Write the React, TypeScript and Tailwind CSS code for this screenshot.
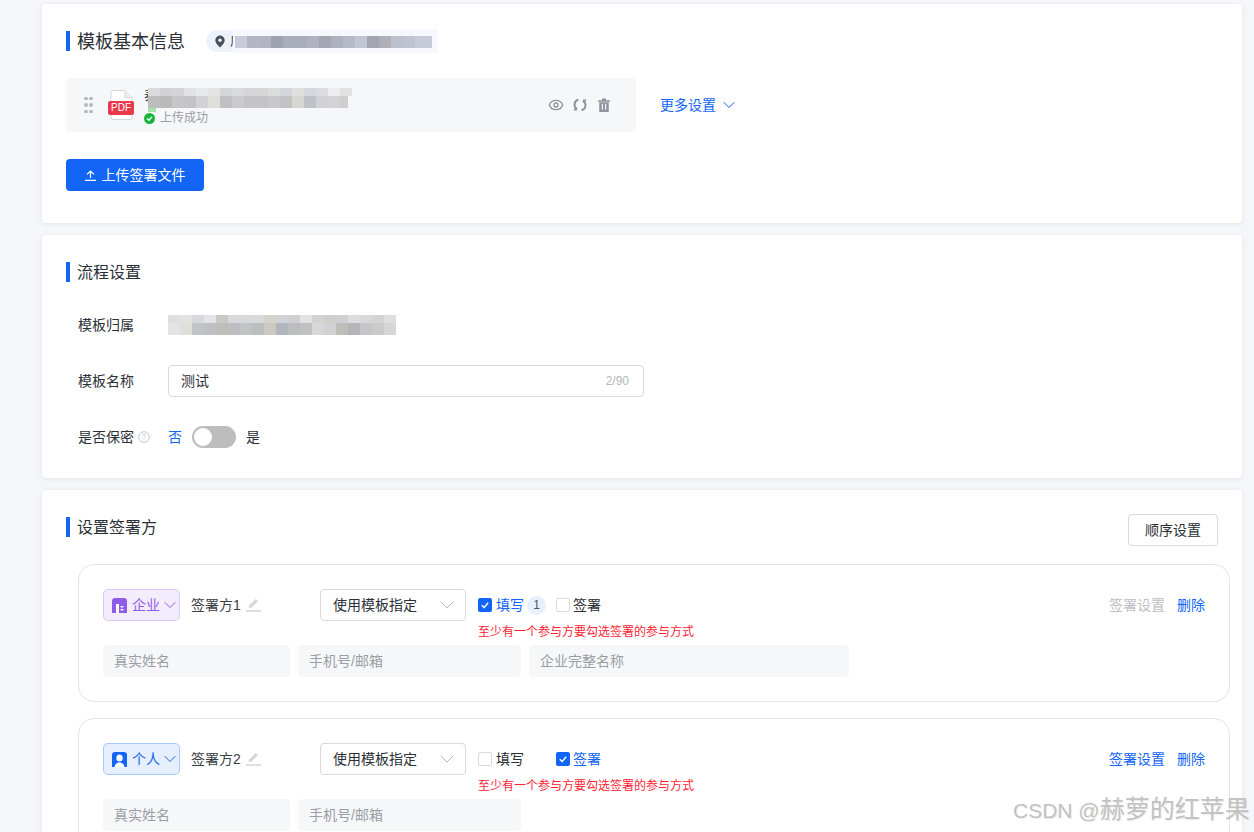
import React from 'react';
import { ChevronDown, Eye } from 'lucide-react';

const tagCells = ['bg-[#c8cbd9]', 'bg-[#b4b7c3]', 'bg-[#b2b5c1]', 'bg-[#9fa3b1]', 'bg-[#a9acb9]', 'bg-[#a9acb9]', 'bg-[#afb2bf]', 'bg-[#a5a6b2]', 'bg-[#adb1bf]', 'bg-[#b6b9c6]', 'bg-[#c2c5d2]', 'bg-[#a3a5b2]', 'bg-[#aeafb9]', 'bg-[#bcc1ce]', 'bg-[#c0c3d0]', 'bg-[#c8ccd9]', 'bg-[#c8ccd9]'];

const fileRowTop = ['bg-[#dadadc]', 'bg-[#d2d2d4]', 'bg-[#d4d4d6]', 'bg-[#e2e2e4]', 'bg-[#e6e9ec]', 'bg-[#e4e4e4]', 'bg-[#d2d6da]', 'bg-[#dadadc]', 'bg-[#d6d6d8]', 'bg-[#d6d6d6]', 'bg-[#dcdcdc]', 'bg-[#d2d6da]', 'bg-[#e0dfde]', 'bg-[#d4d8de]', 'bg-[#dcdcde]', 'bg-[#eeeef0]', 'bg-[#e2e2e2]'];
const fileRowBottom = ['bg-[#bdbdbd]', 'bg-[#bababa]', 'bg-[#c6c6c8]', 'bg-[#c4c4c6]', 'bg-[#d0d2d4]', 'bg-[#dededa]', 'bg-[#bfc0c4]', 'bg-[#cbcbcd]', 'bg-[#c4c4c6]', 'bg-[#c4c4c6]', 'bg-[#c8c8ca]', 'bg-[#c0c2c4]', 'bg-[#d8d6d2]', 'bg-[#bec2c8]', 'bg-[#d2d2d4]', 'bg-[#d4d4d6]', 'bg-[#cfcfd0]'];

const ownerRowTop = ['bg-[#dedfe1]', 'bg-[#e2e2e0]', 'bg-[#d8d9dc]', 'bg-[#e2e3e6]', 'bg-[#cbc9c6]', 'bg-[#d8d9db]', 'bg-[#d8d9db]', 'bg-[#d9dadc]', 'bg-[#d6d3cc]', 'bg-[#d0d4d8]', 'bg-[#d0d0d2]', 'bg-[#e2e2e4]', 'bg-[#d4d2d2]', 'bg-[#d0cfcc]', 'bg-[#d0d0d2]', 'bg-[#dcdcde]', 'bg-[#d8d8da]', 'bg-[#d4d4d4]', 'bg-[#dededf]'];
const ownerRowBottom = ['bg-[#e4e4e6]', 'bg-[#dedfd8]', 'bg-[#c2c3c7]', 'bg-[#bec0c4]', 'bg-[#bfbdb9]', 'bg-[#bcbec2]', 'bg-[#c2c3c4]', 'bg-[#bcbfc0]', 'bg-[#cbc9c1]', 'bg-[#b2b5bd]', 'bg-[#bcbdbf]', 'bg-[#c0c1c2]', 'bg-[#d8d8da]', 'bg-[#d2d2d4]', 'bg-[#bfbdb8]', 'bg-[#b4b5b9]', 'bg-[#c6c6c8]', 'bg-[#cbcbcd]', 'bg-[#d6d6d8]'];

const MosaicRow = ({ cells, height }: { cells: string[]; height: string }) => (
  <div className={`flex overflow-hidden ${height}`}>
    {cells.map((c, i) => (
      <div key={i} className={`w-3 shrink-0 ${c}`} />
    ))}
  </div>
);

const SectionTitle = ({ text, big }: { text: string; big?: boolean }) => (
  <div className="flex items-center h-5">
    <div className="w-1 h-5 bg-[#1366f5]" />
    <span className={`ml-[8px] pt-[2px] -translate-x-px text-[#2b2f36] whitespace-nowrap ${big ? 'text-[18px]' : 'text-[16px]'}`}>{text}</span>
  </div>
);

const PdfIcon = () => (
  <div className="relative w-[26px] h-[30px] shrink-0">
    <svg width="26" height="30" viewBox="0 0 26 30" fill="none">
      <path d="M3 2.5a2 2 0 0 1 2-2h12l7 7v20a2 2 0 0 1-2 2H5a2 2 0 0 1-2-2z" fill="#fff" stroke="#d5d6da" />
      <path d="M17 .5v7h7" stroke="#d5d6da" fill="#eceef1" />
    </svg>
    <div className="absolute left-0 top-[11px] w-[26px] h-[14px] rounded-[2px] bg-[#e9394a] text-white text-[10px] leading-[14px] text-center">
      PDF
    </div>
  </div>
);

const DragDots = () => (
  <div className="grid grid-cols-2 gap-x-[2px] gap-y-[3px] w-2">
    {[0, 1, 2, 3, 4, 5].map((i) => (
      <div key={i} className="w-[3.5px] h-[3.5px] rounded-full bg-[#b4b7bd]" />
    ))}
  </div>
);

const RefreshIcon = () => (
  <svg width="14" height="14" viewBox="0 0 14 14" fill="none" stroke="#8d939c" strokeWidth="2">
    <path d="M5.5 1.8C3 2.4 1.5 4.5 1.5 7c0 1.9.9 3.4 2.4 4.4" />
    <path d="M8.5 12.2c2.5-.6 4-2.7 4-5.2 0-1.9-.9-3.4-2.4-4.4" />
    <path d="M3.2 9.2v2.6H.8" strokeWidth="1.5" />
    <path d="M10.8 4.8V2.2h2.4" strokeWidth="1.5" />
  </svg>
);

const TrashIcon = () => (
  <svg width="14" height="14" viewBox="0 0 14 14">
    <path d="M1 2.2h12v1.500H1zM5 .5h4v1.700H5z" fill="#8d939c" />
    <path d="M2.200 4.200h9.600V13a1 1 0 0 1-1 1H3.200a1 1 0 0 1-1-1z" fill="#8d939c" />
    <path d="M4.800 5.800h1.200v6H4.800zM8 5.800h1.200v6H8z" fill="#f6f7f9" />
  </svg>
);

const UploadIcon = () => (
  <svg width="11" height="11" viewBox="0 0 11 11" fill="none" stroke="#fff" strokeWidth="1.2">
    <path d="M5.500 8V1M2 4.400 5.500 1 9 4.400M0 10.400h11" />
  </svg>
);

const Pencil = () => (
  <svg width="15" height="14" viewBox="0 0 15 14" fill="#d4d6da">
    <path d="M9.600 1 12 3.200 5.600 9.600l-3 .7.7-3z" />
    <rect x="0" y="12.200" width="15" height="1.600" />
  </svg>
);

const Checkbox = ({ checked }: { checked?: boolean }) =>
  checked ? (
    <div className="w-[14px] h-[14px] rounded-[2px] bg-[#1366f5] flex items-center justify-center">
      <svg width="10" height="10" viewBox="0 0 10 10" fill="none" stroke="#fff" strokeWidth="1.400">
        <path d="M1.800 5.200 4.200 7.400 8.200 2.800" />
      </svg>
    </div>
  ) : (
    <div className="w-[14px] h-[14px] rounded-[2px] border border-[#d9d9d9] bg-white" />
  );

const Field = ({ text, width }: { text: string; width: string }) => (
  <div className={`h-8 ${width} rounded-[4px] bg-[#f6f7f9] pl-[11px] flex items-center text-[14px] text-[#9a9ea6]`}>{text}</div>
);

const CompanyIcon = () => (
  <svg width="15" height="15" viewBox="0 0 15 15" className="shrink-0">
    <path d="M3 0h9a3 3 0 0 1 3 3v12H0V3a3 3 0 0 1 3-3z" fill="#8f5be8" />
    <rect x="4" y="6" width="3" height="9" fill="#fff" />
    <rect x="8.500" y="8" width="3" height="1.400" fill="#fff" />
    <rect x="8.500" y="11" width="3" height="1.400" fill="#fff" />
  </svg>
);

const PersonIcon = () => (
  <svg width="15" height="15" viewBox="0 0 15 15" className="shrink-0">
    <path d="M3 0h9a3 3 0 0 1 3 3v12H0V3a3 3 0 0 1 3-3z" fill="#1366f5" />
    <ellipse cx="7.500" cy="6" rx="3.200" ry="3.600" fill="#fff" />
    <path d="M2.500 15c.4-3 2.400-4.500 5-4.500s4.600 1.500 5 4.500z" fill="#fff" />
  </svg>
);

interface SignerProps {
  kind: 'company' | 'person';
  name: string;
  fill?: boolean;
  sign?: boolean;
  settingsOn?: boolean;
}

const SignerCard = ({ kind, name, fill, sign, settingsOn }: SignerProps) => {
  const isCompany = kind === 'company';
  return (
    <div className="border border-[#e3e4e8] rounded-2xl pl-6 pr-6 pt-6 pb-6">
      <div className="flex h-8 text-[14px]">
        <div
          className={`w-[77px] h-8 rounded-[5px] border flex items-center pl-2 shrink-0 ${
            isCompany ? 'bg-[#f3ecfd] border-[#dcc6f8] text-[#8f5be8]' : 'bg-[#e6effe] border-[#a9c8fa] text-[#1366f5]'
          }`}
        >
          {isCompany ? <CompanyIcon /> : <PersonIcon />}
          <span className="ml-[5px] whitespace-nowrap">{isCompany ? '企业' : '个人'}</span>
          <ChevronDown size={20} strokeWidth={1.2} className="shrink-0" />
        </div>
        <div className="w-[129px] ml-[11px] flex items-center text-[#3b3f46] shrink-0">
          <span>{name}</span>
          <span className="ml-[5px]">
            <Pencil />
          </span>
        </div>
        <div className="w-[146px] h-8 rounded-[4px] border border-[#d9d9d9] flex items-center justify-between pl-3 pr-[6px] text-[#2b2f36] shrink-0">
          <span>使用模板指定</span>
          <ChevronDown size={24} strokeWidth={1} className="text-[#b4b7bd]" />
        </div>
        <div className="ml-3 shrink-0">
          <div className="h-8 flex items-center">
            <Checkbox checked={fill} />
            <span className={`ml-1 ${fill ? 'text-[#1366f5]' : 'text-[#2b2f36]'}`}>填写</span>
            {fill ? (
              <span className="ml-[3px] w-[19px] h-[19px] rounded-full bg-[#e8f0fe] text-[#4d5560] text-[12px] leading-[19px] text-center">1</span>
            ) : (
              <span className="w-[22px]" />
            )}
            <span className="ml-[10px]">
              <Checkbox checked={sign} />
            </span>
            <span className={`ml-[3px] ${sign ? 'text-[#1366f5]' : 'text-[#2b2f36]'}`}>签署</span>
          </div>
          <div className="mt-[3px] text-[12px] leading-4 text-[#ff2233] whitespace-nowrap">至少有一个参与方要勾选签署的参与方式</div>
        </div>
        <div className="ml-auto h-8 flex items-center">
          <span className={settingsOn ? 'text-[#1366f5]' : 'text-[#bdbfc4]'}>签署设置</span>
          <span className="ml-3 text-[#1366f5]">删除</span>
        </div>
      </div>
      <div className="flex gap-2 mt-6">
        <Field text="真实姓名" width="w-[187px]" />
        <Field text="手机号/邮箱" width="w-[223px]" />
        {isCompany && <Field text="企业完整名称" width="w-[320px]" />}
      </div>
    </div>
  );
};

export default function App() {
  return (
    <div
      className="relative h-[832px] overflow-hidden bg-[#f5f6f9] pl-[42px] pr-3 pt-1 flex flex-col gap-3"
      style={{ fontFamily: '"Liberation Sans", "Noto Sans CJK SC", sans-serif' }}
    >
      {/* basic info */}
      <div className="shrink-0 bg-white rounded-[4px] shadow-[0_1px_4px_rgba(0,0,0,0.08)] pl-6 pr-6 pt-[26px] pb-8">
        <div className="flex items-center h-[22px]">
          <SectionTitle text="模板基本信息" big />
          <div className="relative ml-5 w-[230px] h-[22px] rounded-l-full bg-[#edf2fd] flex items-center pl-2">
            <svg width="12" height="13" viewBox="0 0 12 13" fill="#4a5058">
              <path fillRule="evenodd" d="M6 .5a4.700 4.700 0 0 1 4.700 4.700C10.700 8.400 6 12.500 6 12.500S1.300 8.400 1.300 5.200A4.700 4.700 0 0 1 6 .5zm0 3a1.800 1.800 0 1 0 0 3.600 1.800 1.800 0 0 0 0-3.600z" />
            </svg>
            <span className="ml-1 text-[13px] text-[#4a5058]">广</span>
            <div className="absolute left-[27px] -top-px w-[205px] h-[24px] bg-[#f7f8fe]">
              <div className="absolute left-[2px] top-[7px] w-[197px]">
                <MosaicRow cells={tagCells} height="h-3" />
              </div>
            </div>
          </div>
        </div>

        <div className="flex items-center mt-[26px]">
          <div className="w-[570px] h-[54px] rounded-[4px] bg-[#f6f7f9] flex items-center pl-[18px] pr-[25px]">
            <DragDots />
            <div className="ml-4">
              <PdfIcon />
            </div>
            <div className="relative ml-[10px] w-[210px] h-[40px]">
              <div className="text-[13px] leading-[18px] pt-[2px] text-[#2b2f36]">泰</div>
              <div className="absolute left-[4px] top-[3px]">
                <MosaicRow cells={fileRowTop} height="h-2 w-[204px]" />
                <MosaicRow cells={fileRowBottom} height="h-3 w-[200px]" />
                <div className="w-2 h-1 bg-[#a8e2ac]" />
              </div>
              <div className="absolute left-0 top-[25px] flex items-center text-[12px] leading-4 text-[#9a9ea6]">
                <svg width="11" height="11" viewBox="0 0 11 11">
                  <circle cx="5.500" cy="5.500" r="5.500" fill="#17b53c" />
                  <path d="M3 5.600 4.900 7.300 8 3.900" fill="none" stroke="#fff" strokeWidth="1.400" />
                </svg>
                <span className="ml-[5px]">上传成功</span>
              </div>
            </div>
            <div className="ml-auto flex items-center gap-[10px] text-[#8d939c]">
              <Eye size={16} strokeWidth={2} className="-mr-px" />
              <RefreshIcon />
              <TrashIcon />
            </div>
          </div>
          <div className="ml-6 flex items-center text-[14px] text-[#1366f5]">
            <span>更多设置</span>
            <ChevronDown size={20} strokeWidth={1.2} className="ml-[3px]" />
          </div>
        </div>

        <button className="mt-[27px] w-[138px] h-8 rounded-[4px] bg-[#1366f5] text-white text-[14px] flex items-center justify-center">
          <UploadIcon />
          <span className="ml-[6px]">上传签署文件</span>
        </button>
      </div>

      {/* flow settings */}
      <div className="shrink-0 bg-white rounded-[4px] shadow-[0_1px_4px_rgba(0,0,0,0.08)] pl-6 pr-6 pt-[27px] pb-[25px]">
        <SectionTitle text="流程设置" />
        <div className="pl-3 mt-[27px] flex flex-col gap-6 text-[14px] text-[#2b2f36]">
          <div className="flex items-center h-8">
            <span className="w-[90px]">模板归属</span>
            <div>
              <MosaicRow cells={ownerRowTop} height="h-2" />
              <MosaicRow cells={ownerRowBottom} height="h-3" />
            </div>
          </div>
          <div className="flex items-center h-8">
            <span className="w-[90px]">模板名称</span>
            <div className="w-[476px] h-8 rounded-[4px] border border-[#d9d9d9] flex items-center justify-between pl-3 pr-[14px]">
              <span>测试</span>
              <span className="text-[12px] text-[#b4b7bd]">2/90</span>
            </div>
          </div>
          <div className="flex items-center h-8">
            <span className="w-[60px] whitespace-nowrap">是否保密</span>
            <svg width="12" height="12" viewBox="0 0 12 12" fill="none" stroke="#c2c6cc">
              <circle cx="6" cy="6" r="5.300" />
              <path d="M4.500 4.700c0-2 3-2 3-.1 0 1.200-1.500 1.200-1.500 2.500" />
              <path d="M6 8.200v1" />
            </svg>
            <span className="ml-[18px] text-[#1366f5]">否</span>
            <div className="ml-[10px] w-[44px] h-[22px] rounded-full bg-[#bdbdbd] flex items-center pl-[2px]">
              <div className="w-[18px] h-[18px] rounded-full bg-white" />
            </div>
            <span className="ml-[10px]">是</span>
          </div>
        </div>
      </div>

      {/* signers */}
      <div className="flex-1 bg-white rounded-[4px] shadow-[0_1px_4px_rgba(0,0,0,0.08)] pl-6 pr-3 pt-6">
        <div className="flex items-start h-8 pr-3">
          <div className="mt-[3px]">
            <SectionTitle text="设置签署方" />
          </div>
          <button className="ml-auto w-[90px] h-8 rounded-[4px] border border-[#d9d9d9] text-[14px] text-[#2b2f36]">顺序设置</button>
        </div>
        <div className="ml-3 mt-[18px] flex flex-col gap-4">
          <SignerCard kind="company" name="签署方1" fill />
          <SignerCard kind="person" name="签署方2" sign settingsOn />
        </div>
      </div>

      <div className="absolute left-[1013px] top-[793px] flex items-baseline leading-8 text-[#c2c2c2] whitespace-nowrap [text-shadow:1px_1px_1px_rgba(0,0,0,0.08)]">
        <span className="text-[21px]">CSDN @</span>
        <span className="text-[25px]">赫萝的红苹果</span>
      </div>
    </div>
  );
}
